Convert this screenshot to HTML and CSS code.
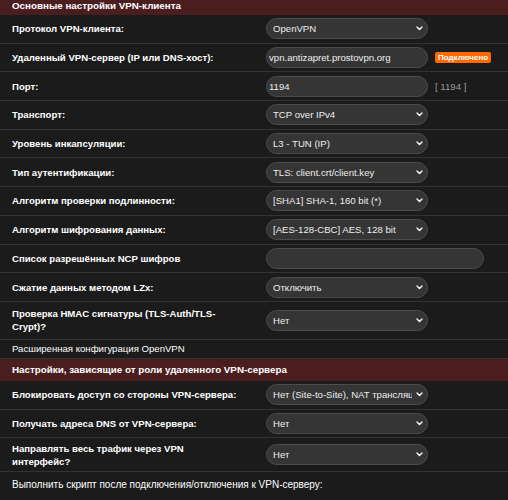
FILE: index.html
```html
<!DOCTYPE html>
<html lang="ru">
<head>
<meta charset="utf-8">
<title>VPN-клиент</title>
<link rel="stylesheet" href="styles.css">
</head>
<body>
<div class="panel">
  <div class="hdr hdr-first">Основные настройки VPN-клиента</div>

  <div class="row">
    <div class="lbl">Протокол VPN-клиента:</div>
    <div class="ctl"><div class="sel"><span class="val">OpenVPN</span><svg class="chev" width="7" height="5" viewBox="0 0 7 5"><path d="M1 1 L3.5 3.6 L6 1" /></svg></div></div>
  </div>

  <div class="row">
    <div class="lbl">Удаленный VPN-сервер (IP или DNS-хост):</div>
    <div class="ctl"><div class="inp">vpn.antizapret.prostovpn.org</div><span class="badge">Подключено</span></div>
  </div>

  <div class="row">
    <div class="lbl">Порт:</div>
    <div class="ctl"><div class="inp">1194</div><span class="hint">[ 1194 ]</span></div>
  </div>

  <div class="row">
    <div class="lbl">Транспорт:</div>
    <div class="ctl"><div class="sel"><span class="val">TCP over IPv4</span><svg class="chev" width="7" height="5" viewBox="0 0 7 5"><path d="M1 1 L3.5 3.6 L6 1" /></svg></div></div>
  </div>

  <div class="row">
    <div class="lbl">Уровень инкапсуляции:</div>
    <div class="ctl"><div class="sel"><span class="val">L3 - TUN (IP)</span><svg class="chev" width="7" height="5" viewBox="0 0 7 5"><path d="M1 1 L3.5 3.6 L6 1" /></svg></div></div>
  </div>

  <div class="row">
    <div class="lbl">Тип аутентификации:</div>
    <div class="ctl"><div class="sel"><span class="val">TLS: client.crt/client.key</span><svg class="chev" width="7" height="5" viewBox="0 0 7 5"><path d="M1 1 L3.5 3.6 L6 1" /></svg></div></div>
  </div>

  <div class="row">
    <div class="lbl">Алгоритм проверки подлинности:</div>
    <div class="ctl"><div class="sel"><span class="val">[SHA1] SHA-1, 160 bit (*)</span><svg class="chev" width="7" height="5" viewBox="0 0 7 5"><path d="M1 1 L3.5 3.6 L6 1" /></svg></div></div>
  </div>

  <div class="row">
    <div class="lbl">Алгоритм шифрования данных:</div>
    <div class="ctl"><div class="sel"><span class="val">[AES-128-CBC] AES, 128 bit</span><svg class="chev" width="7" height="5" viewBox="0 0 7 5"><path d="M1 1 L3.5 3.6 L6 1" /></svg></div></div>
  </div>

  <div class="row">
    <div class="lbl">Список разрешённых NCP шифров</div>
    <div class="ctl"><div class="inp inp-wide"></div></div>
  </div>

  <div class="row">
    <div class="lbl">Сжатие данных методом LZx:</div>
    <div class="ctl"><div class="sel"><span class="val">Отключить</span><svg class="chev" width="7" height="5" viewBox="0 0 7 5"><path d="M1 1 L3.5 3.6 L6 1" /></svg></div></div>
  </div>

  <div class="row">
    <div class="lbl lbl-hmac">Проверка HMAC сигнатуры (TLS-Auth/TLS-Crypt)?</div>
    <div class="ctl"><div class="sel"><span class="val">Нет</span><svg class="chev" width="7" height="5" viewBox="0 0 7 5"><path d="M1 1 L3.5 3.6 L6 1" /></svg></div></div>
  </div>

  <div class="row full">Расширенная конфигурация OpenVPN</div>

  <div class="hdr">Настройки, зависящие от роли удаленного VPN-сервера</div>

  <div class="row">
    <div class="lbl">Блокировать доступ со стороны VPN-сервера:</div>
    <div class="ctl"><div class="sel"><span class="val">Нет (Site-to-Site), NAT трансляция</span><svg class="chev" width="7" height="5" viewBox="0 0 7 5"><path d="M1 1 L3.5 3.6 L6 1" /></svg></div></div>
  </div>

  <div class="row">
    <div class="lbl">Получать адреса DNS от VPN-сервера:</div>
    <div class="ctl"><div class="sel"><span class="val">Нет</span><svg class="chev" width="7" height="5" viewBox="0 0 7 5"><path d="M1 1 L3.5 3.6 L6 1" /></svg></div></div>
  </div>

  <div class="row">
    <div class="lbl lbl-route">Направлять весь трафик через VPN интерфейс?</div>
    <div class="ctl"><div class="sel"><span class="val">Нет</span><svg class="chev" width="7" height="5" viewBox="0 0 7 5"><path d="M1 1 L3.5 3.6 L6 1" /></svg></div></div>
  </div>

  <div class="row full full-last">Выполнить скрипт после подключения/отключения к VPN-серверу:</div>
</div>
</body>
</html>
```

FILE: styles.css
```css
html, body {
  margin: 0;
  padding: 0;
}
body {
  background: #1b1b1b;
  color: #ffffff;
  font-family: "Liberation Sans", Arial, Helvetica, sans-serif;
  font-size: 9.6px;
  height: 500px;
  overflow: hidden;
}
.panel {
  width: 508px;
}
.hdr {
  background: #4a1e1e;
  font-weight: bold;
  font-size: 9.8px;
  line-height: 14px;
  padding: 4px 12px;
}
.hdr-first {
  margin-top: -1px;
  padding-top: 0;
  padding-bottom: 2px;
}
.row {
  display: flex;
  align-items: center;
  border-bottom: 1px solid #333333;
}
.lbl {
  flex: 0 0 254px;
  box-sizing: border-box;
  padding: 0 12px 0 12px;
  font-weight: bold;
  font-size: 9.6px;
  line-height: 13px;
}
.lbl-hmac {
  padding-top: 5.5px;
  padding-bottom: 5.5px;
}
.lbl-route {
  padding-top: 3.5px;
  padding-bottom: 3.5px;
}
.ctl {
  flex: 1;
  display: flex;
  align-items: center;
  gap: 7px;
  padding: 3.35px 0 3.35px 12px;
}
.sel,
.inp {
  box-sizing: border-box;
  width: 162px;
  height: 21px;
  border-radius: 10.5px;
  background: #353535;
  border: 1px solid #4c4c4c;
  display: flex;
  align-items: center;
  color: #eeeeee;
  white-space: nowrap;
}
.sel {
  padding: 0 4px 0 6px;
  gap: 4px;
}
.inp {
  padding: 0 2px;
}
.inp-wide {
  width: 218px;
}
.val {
  flex: 1;
  min-width: 0;
  overflow: hidden;
  white-space: nowrap;
}
.chev {
  flex: 0 0 auto;
}
.chev path {
  fill: none;
  stroke: #f2f2f2;
  stroke-width: 1.4;
  stroke-linecap: round;
  stroke-linejoin: round;
}
.badge {
  background: #ff6a00;
  color: #ffffff;
  font-weight: bold;
  font-size: 8px;
  line-height: 9px;
  padding: 1px 3px;
  border-radius: 2px;
}
.hint {
  color: #9a9a9a;
}
.full {
  display: block;
  padding: 2.5px 12px;
  line-height: 13px;
  font-size: 9.6px;
}
.full-last {
  padding-top: 6px;
  font-size: 10px;
  border-bottom: none;
}
```
